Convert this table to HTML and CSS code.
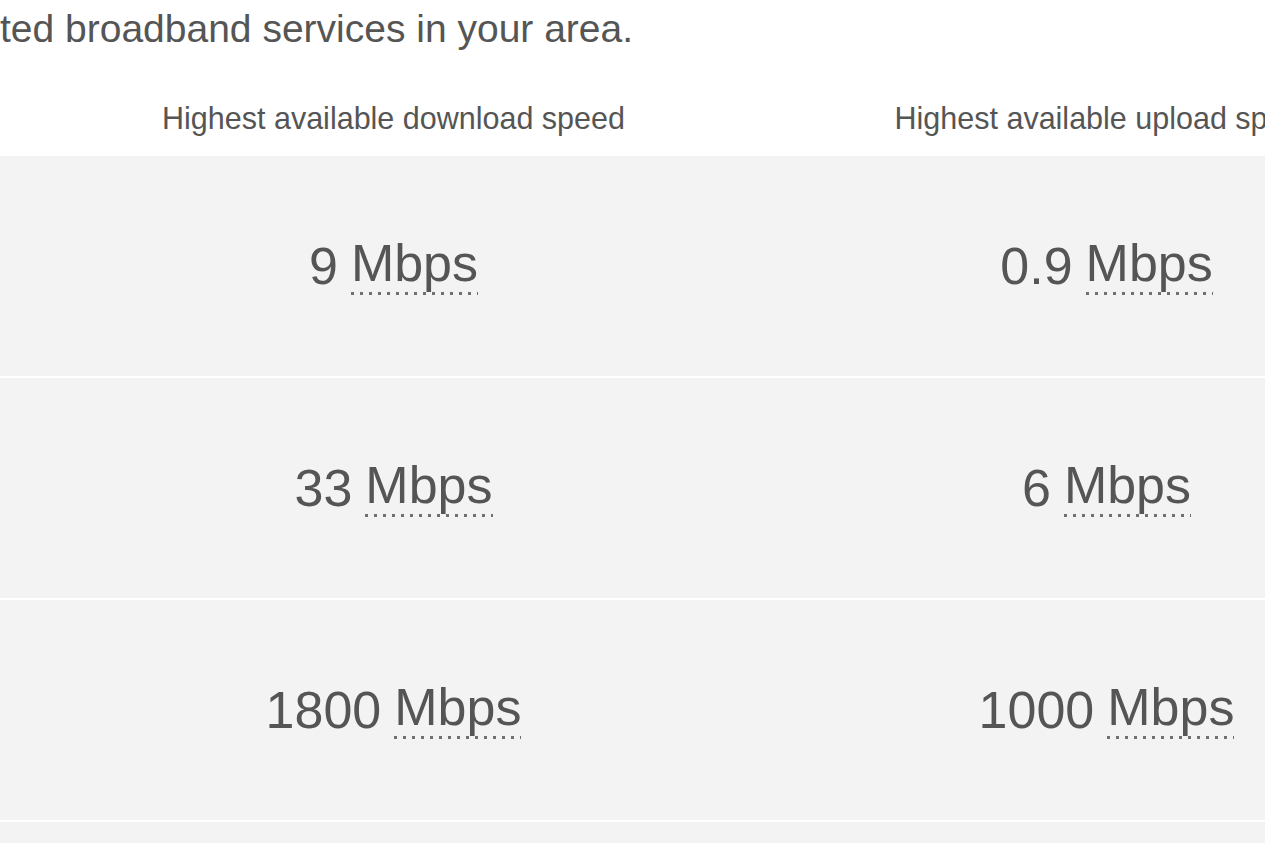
FILE: index.html
```html
<!DOCTYPE html>
<html lang="en">
<head>
<meta charset="utf-8">
<title>Broadband speeds</title>
<link rel="stylesheet" href="styles.css">
</head>
<body>
<main class="page">
  <p class="intro">ted broadband services in your area.</p>
  <div class="speeds">
    <div class="head-row">
      <div class="cell label-cell"></div>
      <div class="cell head">Highest available download speed</div>
      <div class="cell head">Highest available upload speed</div>
    </div>
    <div class="row">
      <div class="cell label-cell"></div>
      <div class="cell value">9 <abbr class="unit" title="megabits per second">Mbps</abbr></div>
      <div class="cell value">0.9 <abbr class="unit" title="megabits per second">Mbps</abbr></div>
    </div>
    <div class="row">
      <div class="cell label-cell"></div>
      <div class="cell value">33 <abbr class="unit" title="megabits per second">Mbps</abbr></div>
      <div class="cell value">6 <abbr class="unit" title="megabits per second">Mbps</abbr></div>
    </div>
    <div class="row">
      <div class="cell label-cell"></div>
      <div class="cell value">1800 <abbr class="unit" title="megabits per second">Mbps</abbr></div>
      <div class="cell value">1000 <abbr class="unit" title="megabits per second">Mbps</abbr></div>
    </div>
    <div class="row">
      <div class="cell label-cell"></div>
      <div class="cell value"></div>
      <div class="cell value"></div>
    </div>
  </div>
</main>
</body>
</html>
```

FILE: styles.css
```css
html, body {
  margin: 0;
  padding: 0;
  background: #ffffff;
  overflow: hidden;
}

body {
  font-family: "Liberation Sans", Arial, sans-serif;
  color: #555555;
}

.page {
  width: 1265px;
  height: 843px;
  overflow: hidden;
}

.intro {
  margin: 0;
  padding-top: 6px;
  font-size: 39px;
  line-height: 45px;
  white-space: nowrap;
}

.speeds {
  margin-top: 49px;
  display: flex;
  flex-direction: column;
  gap: 2px;
  width: 1463px;
}

.head-row,
.row {
  display: grid;
  grid-template-columns: 37px 713px 713px;
}

.head-row {
  padding-bottom: 18px;
}

.row {
  height: 220px;
  background: #f3f3f3;
}

.cell {
  display: flex;
  align-items: center;
  justify-content: center;
  white-space: nowrap;
}

.head {
  font-size: 30.5px;
  line-height: 36px;
}

.value {
  font-size: 52px;
  line-height: 52px;
}

.unit {
  text-decoration: none;
  padding-bottom: 6px;
  margin-left: 0.25em;
  background-image: linear-gradient(to right, #707070 3px, transparent 3px);
  background-size: 9px 3px;
  background-repeat: repeat-x;
  background-position: left bottom;
}
```
